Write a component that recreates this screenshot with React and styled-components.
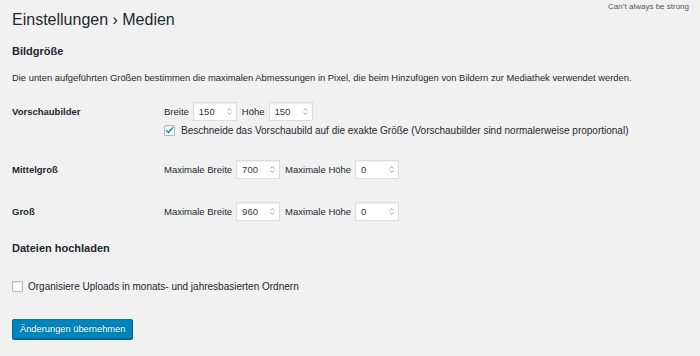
import React from "react";
import styled, { createGlobalStyle } from "styled-components";

const Global = createGlobalStyle`
  html, body { margin: 0; padding: 0; background: #f1f1f1; }
  body {
    font-family: "Liberation Sans", Arial, Helvetica, sans-serif;
    color: #23282d;
    -webkit-font-smoothing: antialiased;
  }
  * { box-sizing: border-box; }
`;

const Wrap = styled.div`
  padding: 0 11px 0 12px;
  width: 700px;
  height: 356px;
  overflow: hidden;
`;

const Header = styled.div`
  display: flex;
  justify-content: space-between;
  align-items: flex-start;
`;

const Title = styled.h1`
  margin: 10px 0 0;
  font-size: 16px;
  line-height: 20px;
  font-weight: 400;
  color: #23282d;
`;

const Note = styled.div`
  margin-top: 2px;
  font-size: 8px;
  line-height: 10px;
  color: #50575e;
`;

const SectionTitle = styled.h2`
  margin: ${(p) => p.$top}px 0 0;
  font-size: 11px;
  line-height: 14px;
  font-weight: 700;
  color: #23282d;
`;

const Description = styled.p`
  margin: 13px 0 0;
  font-size: 9.4px;
  line-height: 14px;
`;

const FormTable = styled.div`
  margin-top: 5.5px;
  display: flex;
  flex-direction: column;
`;

const Row = styled.div`
  display: grid;
  grid-template-columns: 152px 1fr;
  padding: 12px 0 11px;
`;

const RowLabel = styled.div`
  font-size: 9.5px;
  line-height: 19px;
  font-weight: 700;
`;

const Fields = styled.div`
  display: flex;
  flex-direction: column;
  gap: 3px;
`;

const FieldLine = styled.div`
  display: flex;
  align-items: center;
  height: 19px;
  font-size: 9.5px;
`;

const FieldLabel = styled.label`
  margin-right: 4px;
`;

const NumberBox = styled.div`
  display: flex;
  align-items: center;
  width: 44px;
  height: 19px;
  margin-right: 5px;
  padding: 0 4px 0 5px;
  background: #fff;
  border: 1px solid #dddddd;
  box-shadow: inset 0 1px 2px rgba(0, 0, 0, 0.07);
`;

const NumberInput = styled.input`
  flex: 1;
  width: 0;
  border: 0;
  padding: 0;
  margin: 0;
  background: transparent;
  font: inherit;
  font-size: 9.5px;
  color: #32373c;
  outline: none;
`;

const CheckLine = styled.label`
  display: flex;
  align-items: center;
  gap: ${(p) => p.$gap}px;
  font-size: 10px;
  line-height: 13px;
  margin-top: ${(p) => p.$top || 0}px;
`;

const Box = styled.span`
  display: inline-flex;
  align-items: center;
  justify-content: center;
  width: 11px;
  height: 11px;
  flex: none;
  background: #fff;
  border: 1px solid #b4b9be;
  border-radius: 1px;
  box-shadow: inset 0 1px 2px rgba(0, 0, 0, 0.1);
`;

const Button = styled.button`
  margin-top: 26px;
  height: 20px;
  padding: 0 7px;
  font-family: inherit;
  font-size: 9.3px;
  color: #fff;
  background: #0085ba;
  border: 1px solid #0073aa;
  border-color: #0073aa #006799 #006799;
  border-radius: 2px;
  box-shadow: 0 1px 0 #006799;
  text-shadow: 0 -1px 1px #006799;
  cursor: pointer;
`;

const Spinner = () => (
  <svg width="5" height="9" viewBox="0 0 5 9" fill="none">
    <path d="M1 3.2 L2.5 1.6 L4 3.2" stroke="#8a8a8a" strokeWidth="0.8" strokeLinecap="round" strokeLinejoin="round" />
    <path d="M1 5.8 L2.5 7.4 L4 5.8" stroke="#8a8a8a" strokeWidth="0.8" strokeLinecap="round" strokeLinejoin="round" />
  </svg>
);

const Check = () => (
  <svg width="9" height="9" viewBox="0 0 9 9" fill="none">
    <path d="M1.6 4.6 L3.5 6.6 L7.6 1.8" stroke="#1e8cbe" strokeWidth="1.5" strokeLinecap="round" strokeLinejoin="round" />
  </svg>
);

const NumberField = ({ value }) => (
  <NumberBox>
    <NumberInput type="text" defaultValue={value} />
    <Spinner />
  </NumberBox>
);

const SizeRow = ({ label, w, h, maxLabels, children }) => (
  <Row>
    <RowLabel>{label}</RowLabel>
    <Fields>
      <FieldLine>
        <FieldLabel>{maxLabels ? "Maximale Breite" : "Breite"}</FieldLabel>
        <NumberField value={w} />
        <FieldLabel>{maxLabels ? "Maximale Höhe" : "Höhe"}</FieldLabel>
        <NumberField value={h} />
      </FieldLine>
      {children}
    </Fields>
  </Row>
);

export default function App() {
  return (
    <>
      <Global />
      <Wrap>
        <Header>
          <Title>Einstellungen › Medien</Title>
          <Note>Can’t always be strong</Note>
        </Header>
        <SectionTitle $top={13.5}>Bildgröße</SectionTitle>
        <Description>
          Die unten aufgeführten Größen bestimmen die maximalen Abmessungen in Pixel, die beim Hinzufügen von Bildern zur Mediathek verwendet werden.
        </Description>
        <FormTable>
          <SizeRow label="Vorschaubilder" w="150" h="150">
            <CheckLine $gap={6}>
              <Box><Check /></Box>
              Beschneide das Vorschaubild auf die exakte Größe (Vorschaubilder sind normalerweise proportional)
            </CheckLine>
          </SizeRow>
          <SizeRow label="Mittelgroß" w="700" h="0" maxLabels />
          <SizeRow label="Groß" w="960" h="0" maxLabels />
        </FormTable>
        <SectionTitle $top={9}>Dateien hochladen</SectionTitle>
        <CheckLine $gap={5} $top={25}>
          <Box />
          Organisiere Uploads in monats- und jahresbasierten Ordnern
        </CheckLine>
        <Button>Änderungen übernehmen</Button>
      </Wrap>
    </>
  );
}
